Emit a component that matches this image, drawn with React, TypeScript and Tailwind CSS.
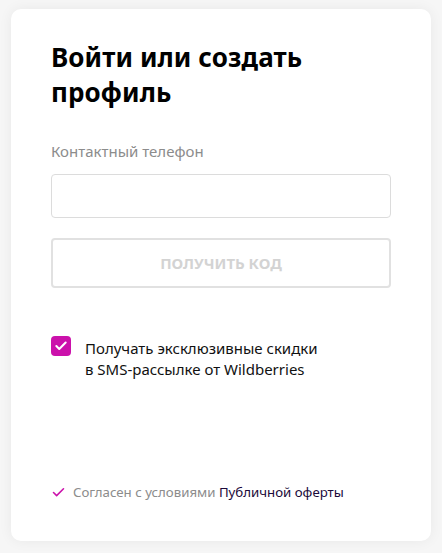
import { Check } from 'lucide-react'

export default function App() {
  return (
    <div className="min-h-[553px] bg-[#f6f6f6] px-[11px] pt-[9px] pb-[12px] font-['Noto_Sans',sans-serif]">
      <div className="flex h-[532px] flex-col rounded-[10px] bg-white px-[40px] pt-[31px] pb-[40px] shadow-[0_0_14px_rgba(0,0,0,0.06)]">
        {/* Title */}
        <h1 className="text-[26px] font-bold leading-[35px] tracking-[0.1px] text-black">
          Войти или создать
          <br />
          профиль
        </h1>

        {/* Phone */}
        <label className="mt-[31px] text-[15px] leading-[20px] text-[#8c8c8c]">Контактный телефон</label>
        <input
          type="tel"
          className="mt-[13px] h-[44px] w-full rounded-[4px] border border-[#dcdcdc] px-3 outline-none"
        />

        <button className="mt-[20px] h-[50px] w-full rounded-[4px] border-2 border-[#e1e1e1] text-[15px] font-bold uppercase text-[#d3d3d3]">
          Получить код
        </button>

        {/* Subscription checkbox */}
        <div className="mt-[47px] flex items-start gap-[14px]">
          <span className="mt-[1px] flex h-[20px] w-[20px] shrink-0 items-center justify-center rounded-[4px] bg-[#cb11ab]">
            <Check className="h-[14px] w-[14px] text-white" strokeWidth={3.5} />
          </span>
          <p className="pt-[3px] text-[15px] leading-[21px] text-[#111]">
            Получать эксклюзивные скидки
            <br />
            в SMS-рассылке от Wildberries
          </p>
        </div>

        {/* Offer */}
        <div className="mt-auto flex items-center gap-[7px] text-[13.25px] leading-[18px]">
          <Check className="h-[15px] w-[15px] text-[#cb11ab]" strokeWidth={2.5} />
          <span className="text-[#8c8c8c]">
            Согласен с условиями <span className="text-[#1b0a3a]">Публичной оферты</span>
          </span>
        </div>
      </div>
    </div>
  )
}
